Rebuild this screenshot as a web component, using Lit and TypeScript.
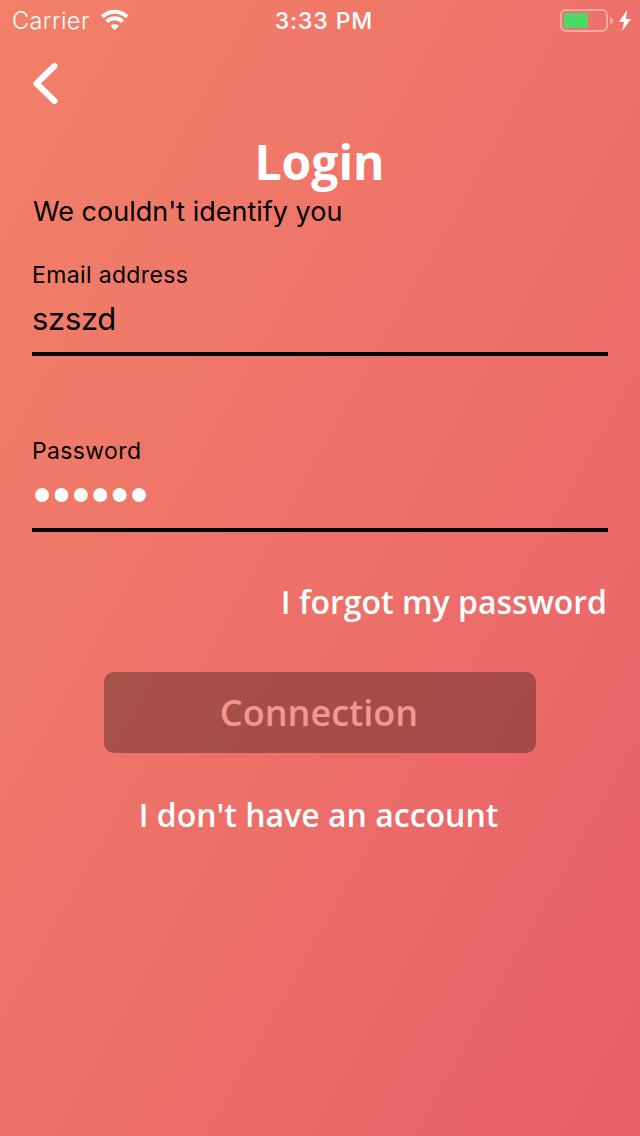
import { LitElement, html, css, svg } from "lit";
import { customElement, property } from "lit/decorators.js";

@customElement("status-bar")
class StatusBar extends LitElement {
  static styles = css`
    :host {
      display: grid;
      grid-template-columns: 1fr auto 1fr;
      align-items: center;
      height: 42px;
      padding: 0 9px 0 12px;
      box-sizing: border-box;
      font: 400 24px/42px Inter, sans-serif;
      color: #fff;
    }
    .left, .right { display: flex; align-items: center; }
    .left { gap: 10px; }
    .carrier { font-weight: 300; font-size: 23.5px; letter-spacing: 0.4px; }
    .right { justify-content: flex-end; }
    .time { font-weight: 500; font-size: 23px; letter-spacing: 0.9px; padding-left: 5px; }
    svg { display: block; }
    .wifi { margin-top: -2px; }
  `;
  render() {
    return html`
      <div class="left">
        <span class="carrier">Carrier</span>
        <svg class="wifi" width="30" height="22" viewBox="0 0 30 22">
          <g fill="none" stroke="#fff" stroke-width="4">
            <path d="M2.3 7.8a17.6 17.6 0 0 1 24.8 0" />
            <path d="M6.8 12.6a11.2 11.2 0 0 1 15.8 0" />
          </g>
          <path d="M14.7 21.2l-4.3-4.4a6.2 6.2 0 0 1 8.6 0z" fill="#fff" />
        </svg>
      </div>
      <span class="time">3:33 PM</span>
      <div class="right">
        <svg width="71" height="24" viewBox="0 0 71 24">
          <rect x="1" y="1" width="46" height="21" rx="5" fill="none" stroke="#fff" stroke-opacity=".4" stroke-width="2" />
          <rect x="4" y="4" width="24" height="15" rx="1.5" fill="#4cd964" />
          <path d="M50 8c4 1 4 7 0 8z" fill="#fff" fill-opacity=".4" />
          <path d="M67 1L59 13h5l-2 9 9-12h-5z" fill="#fff" />
        </svg>
      </div>
    `;
  }
}

@customElement("login-field")
class LoginField extends LitElement {
  @property() label = "";
  @property() value = "";
  @property({ type: Boolean }) secret = false;
  static styles = css`
    :host {
      display: flex;
      flex-direction: column;
      height: 97px;
      box-sizing: border-box;
      border-bottom: 4px solid #000;
      font-family: Inter, sans-serif;
      color: #000;
    }
    .label { font-size: 23px; line-height: 32px; letter-spacing: 0.36px; }
    .value { font-size: 31px; line-height: 40px; margin-top: 8px; letter-spacing: -0.3px; }
    .dots { display: block; margin-top: 20px; }
  `;
  render() {
    return html`
      <span class="label">${this.label}</span>
      ${this.secret
        ? html`<svg class="dots" width="120" height="16" viewBox="0 0 120 16" fill="#fff">
            ${[0, 1, 2, 3, 4, 5].map((i) => svg`<circle cx=${10 + i * 19.4} cy="8" r="7" />`)}
          </svg>`
        : html`<span class="value">${this.value}</span>`}
    `;
  }
}

@customElement("app-root")
class AppRoot extends LitElement {
  static styles = css`
    :host {
      display: flex;
      flex-direction: column;
      height: 1136px;
      background: linear-gradient(to bottom right, #f28168, #ec6d69 62%, #e95f67);
      font-family: "Open Sans", sans-serif;
      color: #fff;
    }
    main { display: flex; flex-direction: column; padding: 20px 32px 0; }
    .back { display: block; }
    h1 { margin: 24px 0 0; padding-right: 1px; text-align: center; font-weight: 700; font-size: 48px; line-height: 66px; }
    .error { margin: -1px 0 0 1px; font: 400 27px/36px Inter, sans-serif; color: #000; }
    .email { margin-top: 29px; }
    .password { margin-top: 79px; }
    .link { font-weight: 600; font-size: 32px; line-height: 44px; }
    .forgot { align-self: flex-end; margin-top: 48px; padding-right: 1px; }
    button {
      align-self: center;
      width: 432px;
      height: 81px;
      margin-top: 48px;
      padding: 0 2px 0 0;
      border: 0;
      border-radius: 10px;
      background: rgba(0, 0, 0, 0.3);
      color: #f29792;
      font: 600 36px/81px "Open Sans", sans-serif;
    }
    .signup { align-self: center; margin-top: 40px; padding-right: 3px; }
  `;
  render() {
    return html`
      <status-bar></status-bar>
      <main>
        <svg class="back" width="28" height="43" viewBox="0 0 28 43">
          <path d="M22.5 4L4.5 21.5l18 17.5" fill="none" stroke="#fff" stroke-width="6" stroke-linecap="round" stroke-linejoin="round" />
        </svg>
        <h1>Login</h1>
        <p class="error">We couldn't identify you</p>
        <login-field class="email" label="Email address" value="szszd"></login-field>
        <login-field class="password" label="Password" secret></login-field>
        <span class="link forgot">I forgot my password</span>
        <button>Connection</button>
        <span class="link signup">I don't have an account</span>
      </main>
    `;
  }
}
